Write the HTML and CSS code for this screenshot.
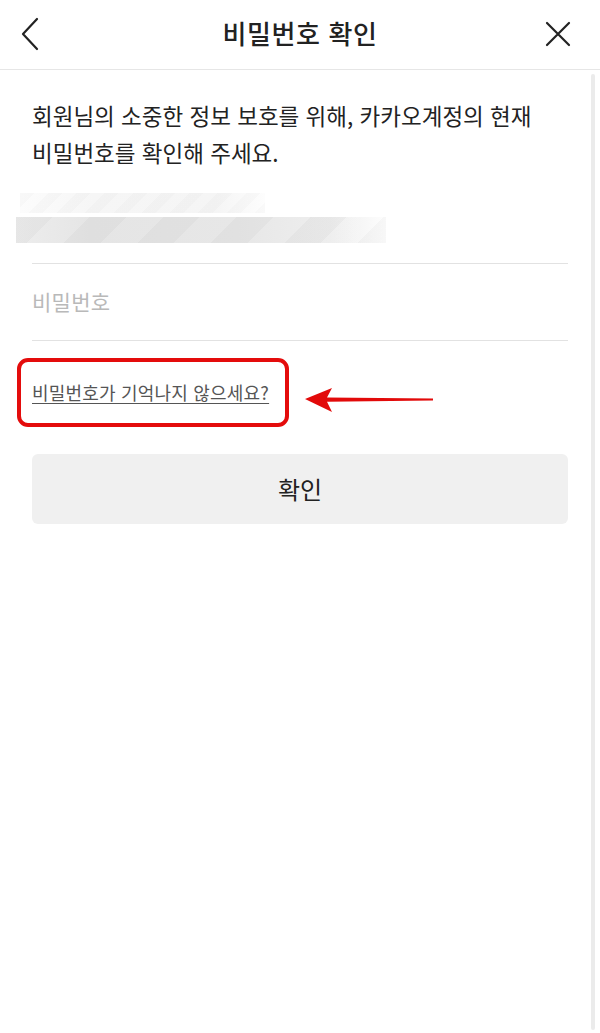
FILE: index.html
```html
<!DOCTYPE html>
<html lang="ko">
<head>
<meta charset="utf-8">
<title>비밀번호 확인</title>
<link rel="stylesheet" href="styles.css">
</head>
<body>
<div class="screen">
  <header class="topbar">
    <button class="icon-btn back" aria-label="뒤로">
      <svg width="20" height="34" viewBox="0 0 20 34"><path d="M17 2 L3 17 L17 32" fill="none" stroke="#222" stroke-width="2.2" stroke-linecap="round" stroke-linejoin="round"/></svg>
    </button>
    <h1 class="title">비밀번호 확인</h1>
    <button class="icon-btn close" aria-label="닫기">
      <svg width="28" height="28" viewBox="0 0 28 28"><path d="M3 3 L25 25 M25 3 L3 25" fill="none" stroke="#222" stroke-width="2.2" stroke-linecap="round"/></svg>
    </button>
  </header>

  <main class="content">
    <p class="desc">회원님의 소중한 정보 보호를 위해, 카카오계정의 현재<br>비밀번호를 확인해 주세요.</p>

    <div class="redacted">
      <div class="band band-top"></div>
      <div class="band band-bottom"></div>
    </div>

    <div class="field">
      <span class="placeholder">비밀번호</span>
    </div>

    <div class="link-row">
      <div class="highlight">
        <a class="forgot" href="#">비밀번호가 기억나지 않으세요?</a>
      </div>
      <svg class="arrow" width="132" height="26" viewBox="0 0 132 26">
        <path d="M0 12 L27 1 L22 10.5 L128 11.6 L128 13.4 L22 14.8 L27 25 Z" fill="#e20a0a"/>
      </svg>
    </div>

    <button class="confirm">확인</button>
  </main>

  <div class="scrollbar"></div>
</div>
</body>
</html>
```

FILE: styles.css
```css
* { box-sizing: border-box; }

html, body {
  margin: 0;
  padding: 0;
  background: #fff;
}

body {
  font-family: "Noto Sans CJK KR", "Noto Sans", sans-serif;
  color: #222;
}

.screen {
  position: relative;
  width: 600px;
  height: 1033px;
  overflow: hidden;
}

.topbar {
  height: 70px;
  border-bottom: 1px solid #e6e6e6;
  display: flex;
  align-items: center;
  justify-content: space-between;
  padding: 0 28px 4px 20px;
}

.icon-btn {
  border: 0;
  background: none;
  padding: 0;
  display: flex;
  align-items: center;
}

.back { width: 36px; height: 36px; margin-top: 2px; justify-content: flex-start; }
.close { width: 28px; height: 28px; margin-top: 2px; justify-content: center; }

.title {
  margin: 0;
  font-size: 26px;
  font-weight: 500;
  letter-spacing: 0.6px;
  color: #222;
}

.content {
  padding: 0 32px;
}

.desc {
  margin: 27px 0 0;
  font-size: 22.5px;
  line-height: 37px;
  letter-spacing: 0;
  color: #222;
}

.redacted {
  margin: 22px 0 0 -16px;
  height: 52px;
  display: flex;
  flex-direction: column;
  gap: 4px;
}

.band-top {
  margin-left: 4px;
  width: 245px;
  height: 20px;
  background:
    repeating-linear-gradient(135deg, rgba(0,0,0,0.015) 0 10px, rgba(255,255,255,0) 10px 20px),
    linear-gradient(90deg, rgba(240,240,240,0.2), #f6f6f6 30%, #f5f5f5 80%, rgba(245,245,245,0.2));
}

.band-bottom {
  width: 370px;
  height: 26px;
  background:
    repeating-linear-gradient(135deg, rgba(0,0,0,0.025) 0 26px, rgba(255,255,255,0.05) 26px 52px),
    linear-gradient(90deg, #ececec, #e4e4e4 20%, #e6e6e6 60%, #ededed 85%, rgba(250,250,250,0.3));
}

.field {
  margin-top: 18px;
  height: 78px;
  border-top: 1px solid #e2e2e2;
  border-bottom: 1px solid #e2e2e2;
  display: flex;
  align-items: center;
  padding-bottom: 2px;
}

.placeholder {
  font-size: 21px;
  color: #b9b9b9;
  letter-spacing: 0.3px;
}

.link-row {
  margin: 17px 0 0 -15px;
  display: flex;
  align-items: flex-start;
  gap: 16px;
}

.highlight {
  width: 272px;
  height: 69px;
  border: 4px solid #e40c0c;
  border-radius: 11px;
  display: flex;
  align-items: center;
  padding-left: 11px;
}

.forgot {
  font-size: 18px;
  color: #555;
  text-decoration: underline;
  text-underline-offset: 3px;
  letter-spacing: 0.2px;
  margin-top: -2px;
}

.arrow {
  margin-top: 29px;
}

.confirm {
  display: block;
  width: 100%;
  margin-top: 27px;
  height: 70px;
  border: 0;
  border-radius: 6px;
  background: #f0f0f0;
  font-family: inherit;
  font-size: 24px;
  color: #222;
  padding-bottom: 2px;
}

.scrollbar {
  position: absolute;
  top: 74px;
  right: 5px;
  width: 4px;
  height: 956px;
  border-radius: 2px;
  background: #ebebeb;
}
```
